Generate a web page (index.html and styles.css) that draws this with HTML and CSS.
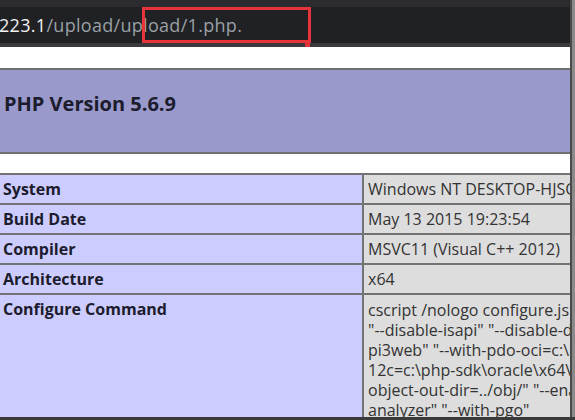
FILE: index.html
```html
<!DOCTYPE html>
<html>
<head>
<meta charset="utf-8">
<link rel="stylesheet" href="styles.css">
</head>
<body>
<div class="screen">
  <div class="main">
    <div class="toolbar">
      <div class="tabstrip"></div>
      <div class="omnibox"><span class="host">223.1</span><span class="path">/upload/upload/1.php.</span></div>
      <div class="mark"></div>
      <div class="mark-tail"></div>
    </div>
    <div class="page">
      <div class="gap-top"></div>
      <div class="h-band"><h1>PHP Version 5.6.9</h1></div>
      <div class="gap-mid"></div>
      <table class="info">
        <tr><td class="e">System</td><td class="v">Windows NT DESKTOP-HJSQK7M 10.0 build 19041 (Windows 10) AMD64</td></tr>
        <tr><td class="e">Build Date</td><td class="v">May 13 2015 19:23:54</td></tr>
        <tr><td class="e">Compiler</td><td class="v">MSVC11 (Visual C++ 2012)</td></tr>
        <tr><td class="e">Architecture</td><td class="v">x64</td></tr>
        <tr class="tall"><td class="e">Configure Command</td><td class="v cmd">cscript /nologo configure.js "--enable-snapshot-build"<br>"--disable-isapi" "--disable-debug-pack" "--without-<br>pi3web" "--with-pdo-oci=c:\php-sdk\oracle\x64\instantclient<br>12c=c:\php-sdk\oracle\x64\instantclient_12_1\sdk,shared" "--enable-<br>object-out-dir=../obj/" "--enable-com-dotnet=shared" "--without-<br>analyzer" "--with-pgo"</td></tr>
      </table>
    </div>
  </div>
  <div class="edge"></div>
</div>
<div class="bottom-edge"></div>
</body>
</html>
```

FILE: styles.css
```css
html, body {
  margin: 0;
  padding: 0;
  background: #ffffff;
  overflow: hidden;
  width: 575px;
  height: 420px;
}

.screen {
  display: flex;
  height: 417px;
}

.main {
  width: 570px;
  overflow: hidden;
  display: flex;
  flex-direction: column;
}

.edge {
  width: 5px;
  background: linear-gradient(to right, #4a4a4a 0, #4a4a4a 2px, #8a8a8a 2px);
}

.bottom-edge {
  height: 3px;
  background: #3a3a3a;
}

.toolbar {
  position: relative;
  height: 47px;
  background: #202124;
  flex: none;
}

.tabstrip {
  height: 7px;
  background: #2c2c30;
}

.omnibox {
  height: 36px;
  display: flex;
  align-items: center;
  font-family: "Open Sans", "Noto Sans", sans-serif;
  font-size: 18px;
  letter-spacing: 0.3px;
  white-space: nowrap;
  margin-left: -1px;
  border-bottom: 4px solid #3a3a3e;
}

.host { color: #f2f2f2; }
.path { color: #9aa0a6; }

.mark {
  position: absolute;
  left: 142px;
  top: 7px;
  width: 163px;
  height: 30px;
  border: 3px solid #e8333a;
}

.mark-tail {
  position: absolute;
  left: 305px;
  top: 40px;
  width: 5px;
  height: 7px;
  background: #e8333a;
}

.page {
  flex: 1;
  background: #ffffff;
  font-family: "Open Sans", "Noto Sans", sans-serif;
  color: #222222;
}

.gap-top { height: 21px; }
.gap-mid { height: 19px; }

.h-band {
  height: 82px;
  background: #9999cc;
  border-top: 2px solid #707070;
  border-bottom: 2px solid #707070;
  display: flex;
  align-items: center;
  padding-left: 4px;
}

.h-band h1 {
  margin: 0 0 15px 0;
  font-size: 20px;
  font-weight: 700;
  color: #1c1c2c;
}

.info {
  border-collapse: collapse;
  margin-left: -2px;
  width: 760px;
  table-layout: fixed;
}

.info td {
  border: 2px solid #737373;
  height: 28px;
  padding: 0 4px;
  font-size: 16px;
  vertical-align: top;
  line-height: 28px;
  white-space: nowrap;
  overflow: hidden;
}

.info td.e {
  width: 355px;
  background: #ccccff;
  font-weight: 700;
  color: #1c1c2c;
  padding-left: 3px;
}

.info td.v {
  background: #dddddd;
  color: #333333;
  padding-left: 4px;
}

.info tr.tall td {
  height: 130px;
}

.info td.cmd {
  line-height: 20px;
  padding-top: 5px;
}
```
